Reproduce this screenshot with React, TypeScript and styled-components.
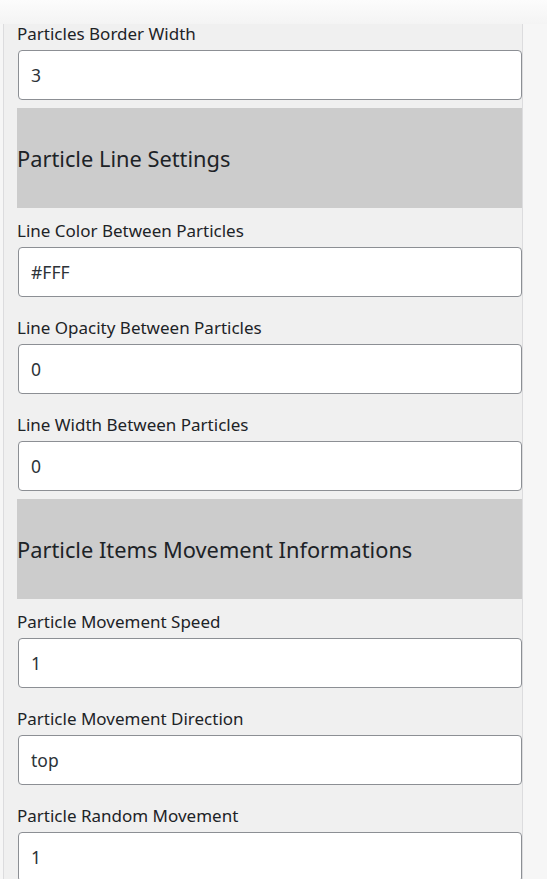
import React from "react";
import styled, { createGlobalStyle, css } from "styled-components";

const GlobalStyle = createGlobalStyle`
  html, body {
    margin: 0;
    padding: 0;
    background: #f6f6f6;
  }
  body {
    font-family: "Noto Sans", "Open Sans", sans-serif;
    color: #1d2327;
  }
`;

type Item =
  | { kind: "field"; label: string; value: string }
  | { kind: "section"; title: string };

const items: Item[] = [
  { kind: "field", label: "Particles Border Width", value: "3" },
  { kind: "section", title: "Particle Line Settings" },
  { kind: "field", label: "Line Color Between Particles", value: "#FFF" },
  { kind: "field", label: "Line Opacity Between Particles", value: "0" },
  { kind: "field", label: "Line Width Between Particles", value: "0" },
  { kind: "section", title: "Particle Items Movement Informations" },
  { kind: "field", label: "Particle Movement Speed", value: "1" },
  { kind: "field", label: "Particle Movement Direction", value: "top" },
  { kind: "field", label: "Particle Random Movement", value: "1" },
];

const Page = styled.div`
  width: 547px;
  min-height: 879px;
  background: linear-gradient(to bottom, #fcfcfc 0px, #f4f4f4 24px, #f6f6f6 24px);
`;

const TopShade = styled.div`
  height: 24px;
`;

const Panel = styled.div`
  margin-left: 3px;
  width: 520px;
  background: #f0f0f0;
  border-left: 1px solid #dcdcde;
  border-right: 1px solid #dcdcde;
  padding-left: 13px;
  box-sizing: border-box;
  padding-bottom: 20px;
`;

const Field = styled.div<{ $first: boolean }>`
  display: flex;
  flex-direction: column;
  gap: 6px;
  padding: 13px 0 8px;
  ${({ $first }) =>
    $first &&
    css`
      padding-top: 0;
    `}
`;

const Label = styled.label`
  font-size: 17px;
  line-height: 20px;
  font-weight: 400;
  color: #1d2327;
`;

const Input = styled.input`
  box-sizing: border-box;
  margin: 0 0 0 1px;
  width: calc(100% - 1px);
  height: 50px;
  padding: 0 12px;
  border: 1px solid #8c8f94;
  border-radius: 4px;
  background: #fff;
  font-family: "Noto Sans", "Open Sans", sans-serif;
  font-size: 17.5px;
  font-weight: 400;
  color: #2c3338;
  outline: none;
`;

const Section = styled.div`
  height: 100px;
  display: flex;
  align-items: center;
  background: #cccccc;
  font-size: 21.8px;
  font-weight: 400;
  color: #1d2327;
`;

export default function App() {
  return (
    <Page>
      <GlobalStyle />
      <TopShade />
      <Panel>
        {items.map((item, i) =>
          item.kind === "section" ? (
            <Section key={i}>{item.title}</Section>
          ) : (
            <Field key={i} $first={i === 0}>
              <Label>{item.label}</Label>
              <Input defaultValue={item.value} readOnly />
            </Field>
          )
        )}
      </Panel>
    </Page>
  );
}
